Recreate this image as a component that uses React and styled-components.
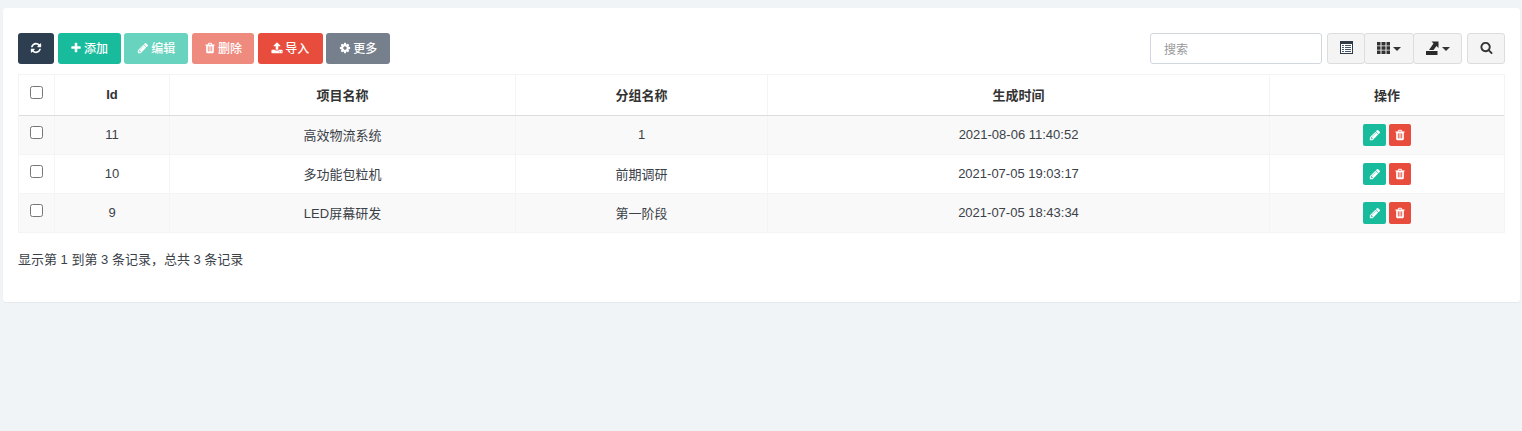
import React from "react"
import styled, { createGlobalStyle } from "styled-components"

const GlobalStyle = createGlobalStyle`
html, body {
  margin: 0;
  padding: 0;
  background: #f1f4f6;
  font-family: "Liberation Sans", "Noto Sans CJK SC", sans-serif;
  font-size: 13px;
  color: #3b4148;
}
* { box-sizing: border-box; }
`

const Page = styled.div`
  width: 1522px;
  height: 431px;
  padding: 8px 2px 0 3px;
`
const Panel = styled.div`
  height: 294px;
  background: #fff;
  border-radius: 3px;
  box-shadow: 0 1px 1px rgba(0, 0, 0, 0.05);
  padding: 25px 15px 0 15px;
`
const Toolbar = styled.div`
  display: flex;
  justify-content: space-between;
  height: 31px;
  margin-bottom: 10px;
`
const Group = styled.div`
  display: flex;
  gap: ${props => props.gap || 0}px;
`
const Button = styled.div`
  display: flex;
  align-items: center;
  justify-content: center;
  gap: 2px;
  height: 31px;
  padding-bottom: 2px;
  width: ${props => props.w}px;
  border-radius: 3px;
  background: ${props => props.bg};
  color: #fff;
  font-size: 12px;
  font-weight: 500;
  opacity: ${props => props.faded ? 0.65 : 1};
`
const SearchInput = styled.div`
  display: flex;
  align-items: center;
  width: 172px;
  height: 31px;
  padding-left: 13px;
  margin-right: 5px;
  border: 1px solid #d2d6de;
  border-radius: 3px;
  color: #999;
  font-size: 12px;
`
const ToolButton = styled.div`
  display: flex;
  align-items: center;
  justify-content: center;
  gap: 3px;
  height: 31px;
  padding-bottom: 2px;
  width: ${props => props.w}px;
  margin-left: ${props => props.ml || 0}px;
  background: #f4f4f4;
  border: 1px solid #ddd;
  border-radius: 3px;
  color: #333;
`
const Caret = styled.span`
  display: block;
  width: 0;
  height: 0;
  margin-top: 2px;
  border-top: 4px solid #333;
  border-left: 4px solid transparent;
  border-right: 4px solid transparent;
`
const Table = styled.div`
  width: 1487px;
  border: 1px solid #f4f4f4;
`
const Row = styled.div`
  display: grid;
  grid-template-columns: 35px 115px 346px 252px 502px 1fr;
  height: ${props => props.head ? 41 : 39}px;
  background: ${props => props.odd ? "#f9f9f9" : "#fff"};
  border-bottom: ${props => props.head ? "1px solid #dcdcdc" : "1px solid #f4f4f4"};
  &:last-child { border-bottom: none; height: 38px; }
`
const Cell = styled.div`
  display: flex;
  align-items: center;
  justify-content: center;
  gap: 3px;
  padding-bottom: 1px;
  border-left: ${props => props.first ? "none" : "1px solid #f4f4f4"};
  font-size: 13px;
  font-weight: ${props => props.head ? 700 : 400};
  color: ${props => props.head ? "#333" : "#3b4148"};
`
const Check = styled.span`
  display: block;
  width: 13px;
  height: 13px;
  margin-bottom: 4px;
  border: 1px solid #767676;
  border-radius: 2.5px;
  background: #fff;
`
const RowButton = styled.div`
  display: flex;
  align-items: center;
  justify-content: center;
  width: ${props => props.w}px;
  height: 22px;
  border-radius: 2px;
  background: ${props => props.bg};
  color: #fff;
`
const Pagination = styled.div`
  margin-top: 18px;
  font-size: 13px;
  line-height: 18px;
  color: #3b4148;
`

const paths = {
  refresh: "M1639 1056q0 5-1 7-64 268-268 434.500t-478 166.500q-146 0-282.500-55t-243.500-157l-129 129q-19 19-45 19t-45-19-19-45v-448q0-26 19-45t45-19h448q26 0 45 19t19 45-19 45l-137 137q71 66 161 102t187 36q134 0 250-65t186-179q11-17 53-117 8-23 30-23h192q13 0 22.500 9.500t9.500 22.500zm25-800v448q0 26-19 45t-45 19h-448q-26 0-45-19t-19-45 19-45l138-138q-148-137-349-137-134 0-250 65t-186 179q-11 17-53 117-8 23-30 23h-199q-13 0-22.500-9.500t-9.500-22.500v-7q65-268 270-434.500t480-166.500q146 0 284 55.500t245 156.500l130-129q19-19 45-19t45 19 19 45z",
  plus: "M1600 736v192q0 40-28 68t-68 28h-416v416q0 40-28 68t-68 28h-192q-40 0-68-28t-28-68v-416h-416q-40 0-68-28t-28-68v-192q0-40 28-68t68-28h416v-416q0-40 28-68t68-28h192q40 0 68 28t28 68v416h416q40 0 68 28t28 68z",
  pencil: "M491 1536l91-91-235-235-91 91v107h128v128h107zm523-928q0-22-22-22-10 0-17 7l-542 542q-7 7-7 17 0 22 22 22 10 0 17-7l542-542q7-7 7-17zm-54-192l416 416-832 832h-416v-416zm683 96q0 53-37 90l-166 166-416-416 166-165q36-38 90-38 53 0 91 38l235 234q37 39 37 91z",
  trash: "M704 1376v-704q0-14-9-23t-23-9h-64q-14 0-23 9t-9 23v704q0 14 9 23t23 9h64q14 0 23-9t9-23zm256 0v-704q0-14-9-23t-23-9h-64q-14 0-23 9t-9 23v704q0 14 9 23t23 9h64q14 0 23-9t9-23zm256 0v-704q0-14-9-23t-23-9h-64q-14 0-23 9t-9 23v704q0 14 9 23t23 9h64q14 0 23-9t9-23zm-544-992h448l-48-117q-7-9-17-11h-317q-10 2-17 11zm928 32v64q0 14-9 23t-23 9h-96v948q0 83-47 143.500t-113 60.500h-832q-66 0-113-58.500t-47-141.500v-952h-96q-14 0-23-9t-9-23v-64q0-14 9-23t23-9h309l70-167q15-37 54-63t79-26h320q40 0 79 26t54 63l70 167h309q14 0 23 9t9 23z",
  upload: "M1344 1472q0-26-19-45t-45-19-45 19-19 45 19 45 45 19 45-19 19-45zm256 0q0-26-19-45t-45-19-45 19-19 45 19 45 45 19 45-19 19-45zm128-224v320q0 40-28 68t-68 28h-1472q-40 0-68-28t-28-68v-320q0-40 28-68t68-28h427q21 56 70.500 92t110.500 36h256q61 0 110.500-36t70.500-92h427q40 0 68 28t28 68zm-325-648q-17 40-59 40h-256v448q0 26-19 45t-45 19h-256q-26 0-45-19t-19-45v-448h-256q-42 0-59-40-17-39 14-69l448-448q18-19 45-19t45 19l448 448q31 30 14 69z",
  cog: "M1152 896q0-106-75-181t-181-75-181 75-75 181 75 181 181 75 181-75 75-181zm512-109v222q0 12-8 23t-20 13l-185 28q-19 54-39 91 35 50 107 138 10 12 10 25t-9 23q-27 37-99 108t-94 71q-12 0-26-9l-138-108q-44 23-91 38-16 136-29 186-7 28-36 28h-222q-14 0-24.500-8.500t-11.500-21.500l-28-184q-49-16-90-37l-141 107q-10 9-25 9-14 0-25-11-126-114-165-168-7-10-7-23 0-12 8-23 15-21 51-66.500t54-70.500q-27-50-41-99l-183-27q-13-2-21-12.500t-8-23.500v-222q0-12 8-23t19-13l186-28q14-46 39-92-40-57-107-138-10-12-10-24 0-10 9-23 26-36 98.500-107.500t94.500-71.500q13 0 26 10l138 107q44-23 91-38 16-136 29-186 7-28 36-28h222q14 0 24.500 8.500t11.500 21.500l28 184q49 16 90 37l142-107q9-9 24-9 13 0 25 10 129 119 165 170 7 8 7 22 0 12-8 23-15 21-51 66.500t-54 70.500q26 50 41 98l183 28q13 2 21 12.500t8 23.500z",
  search: "M1216 832q0-185-131.500-316.500t-316.500-131.500-316.500 131.500-131.500 316.500 131.500 316.500 316.500 131.500 316.500-131.500 131.500-316.500zm512 832q0 52-38 90t-90 38q-54 0-90-38l-343-342q-179 124-399 124-143 0-273.500-55.500t-225-150-150-225-55.500-273.500 55.500-273.500 150-225 225-150 273.500-55.500 273.500 55.500 225 150 150 225 55.500 273.500q0 220-124 399l343 343q37 37 37 90z",
}

const Icon = ({ name, size = 12 }) => (
  <svg width={size} height={size} viewBox="0 0 1792 1792" fill="currentColor">
    <path d={paths[name]} />
  </svg>
)

const ListAltIcon = () => (
  <svg width="13" height="13" viewBox="0 0 13 13">
    <rect x="0.5" y="0.5" width="12" height="12" fill="#fff" stroke="#2f3a44" />
    <path d="M1 1h11v2H1z" fill="#2f3a44" />
    <path d="M2 4.500h9M2 6.500h9M2 8.500h9M2 10.500h9" stroke="#44586b" />
    <path d="M4.500 4v7" stroke="#fff" />
  </svg>
)

const GridIcon = () => (
  <svg width="13" height="12" viewBox="0 0 13 12" fill="#333">
    <path d="M0 0h3.500v3.500H0zM4.500 0h4v3.500h-4zM9.500 0H13v3.500H9.500zM0 4.250h3.500v3.500H0zM4.500 4.250h4v3.500h-4zM9.500 4.250H13v3.500H9.500zM0 8.500h3.500V12H0zM4.500 8.500h4V12h-4zM9.500 8.500H13V12H9.500z" />
  </svg>
)

const ExportIcon = () => (
  <svg width="14" height="14" viewBox="0 0 14 14" fill="#2b2b2b">
    <path d="M1 14V10h11.500v4z" />
    <path d="M6.500 0.500H13.500V7L11.500 5 8.500 9H4L8.500 2.500z" />
  </svg>
)

const rows = [
  { id: 11, name: "高效物流系统", group: "1", time: "2021-08-06 11:40:52" },
  { id: 10, name: "多功能包粒机", group: "前期调研", time: "2021-07-05 19:03:17" },
  { id: 9, name: "LED屏幕研发", group: "第一阶段", time: "2021-07-05 18:43:34" },
]

const App = () => {
  return (
    <Page>
      <GlobalStyle />
      <Panel>
        <Toolbar>
          <Group gap={3.6}>
            <Button w={36} bg="#2c3e50"><Icon name="refresh" /></Button>
            <Button w={63} bg="#18bc9c"><Icon name="plus" />添加</Button>
            <Button w={64} bg="#18bc9c" faded><Icon name="pencil" />编辑</Button>
            <Button w={62.4} bg="#e74c3c" faded><Icon name="trash" />删除</Button>
            <Button w={65} bg="#e74c3c"><Icon name="upload" />导入</Button>
            <Button w={64} bg="#76808c"><Icon name="cog" />更多</Button>
          </Group>
          <Group>
            <SearchInput>搜索</SearchInput>
            <ToolButton w={38}><ListAltIcon /></ToolButton>
            <ToolButton w={50} ml={-1}><GridIcon /><Caret /></ToolButton>
            <ToolButton w={49} ml={-1}><ExportIcon /><Caret /></ToolButton>
            <ToolButton w={38} ml={5}><Icon name="search" size={13} /></ToolButton>
          </Group>
        </Toolbar>
        <Table>
          <Row head>
            <Cell first head><Check /></Cell>
            <Cell head>Id</Cell>
            <Cell head>项目名称</Cell>
            <Cell head>分组名称</Cell>
            <Cell head>生成时间</Cell>
            <Cell head>操作</Cell>
          </Row>
          {rows.map((r, i) => (
            <Row key={r.id} odd={i % 2 === 0}>
              <Cell first><Check /></Cell>
              <Cell>{r.id}</Cell>
              <Cell>{r.name}</Cell>
              <Cell>{r.group}</Cell>
              <Cell>{r.time}</Cell>
              <Cell>
                <RowButton w={23} bg="#18bc9c"><Icon name="pencil" size={12} /></RowButton>
                <RowButton w={22} bg="#e74c3c"><Icon name="trash" size={12} /></RowButton>
              </Cell>
            </Row>
          ))}
        </Table>
        <Pagination>显示第 1 到第 3 条记录，总共 3 条记录</Pagination>
      </Panel>
    </Page>
  )
}

export default App
